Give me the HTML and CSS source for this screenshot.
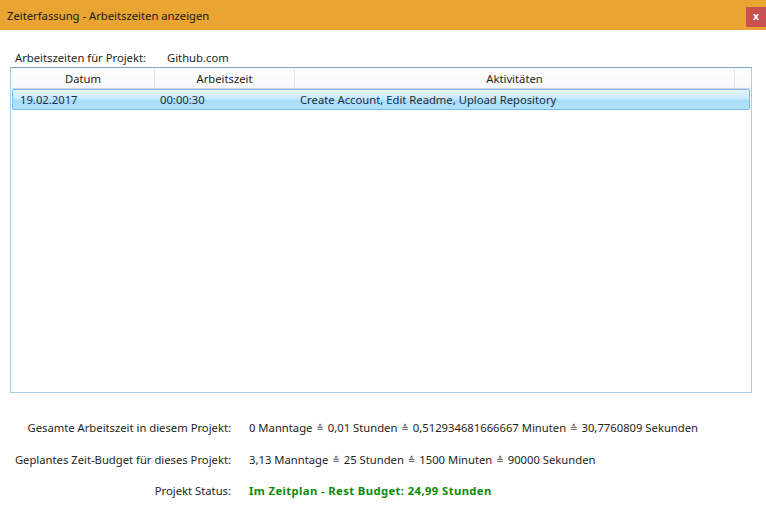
FILE: index.html
```html
<!DOCTYPE html>
<html lang="de">
<head>
<meta charset="utf-8">
<title>Zeiterfassung - Arbeitszeiten anzeigen</title>
<link rel="stylesheet" href="styles.css">
</head>
<body>
<div class="window">
  <header class="titlebar">
    <span class="title">Zeiterfassung - Arbeitszeiten anzeigen</span>
    <button class="close">x</button>
  </header>
  <main class="content">
    <div class="project">
      <span class="project-label">Arbeitszeiten für Projekt:</span>
      <span class="project-name">Github.com</span>
    </div>
    <div class="list">
      <div class="list-head">
        <div class="col c1">Datum</div>
        <div class="col c2">Arbeitszeit</div>
        <div class="col c3">Aktivitäten</div>
        <div class="col c4"></div>
      </div>
      <div class="row selected">
        <div class="cell c1">19.02.2017</div>
        <div class="cell c2">00:00:30</div>
        <div class="cell c3">Create Account, Edit Readme, Upload Repository</div>
      </div>
    </div>
    <div class="summary">
      <div class="s-label">Gesamte Arbeitszeit in diesem Projekt:</div>
      <div class="s-value">0 Manntage <span class="eq">≙</span> 0,01 Stunden <span class="eq">≙</span> 0,512934681666667 Minuten <span class="eq">≙</span> 30,7760809 Sekunden</div>
      <div class="s-label">Geplantes Zeit-Budget für dieses Projekt:</div>
      <div class="s-value">3,13 Manntage <span class="eq">≙</span> 25 Stunden <span class="eq">≙</span> 1500 Minuten <span class="eq">≙</span> 90000 Sekunden</div>
      <div class="s-label">Projekt Status:</div>
      <div class="s-value status">Im Zeitplan - Rest Budget: 24,99 Stunden</div>
    </div>
  </main>
</div>
</body>
</html>
```
FILE: styles.css
```css
* { box-sizing: border-box; }
html, body { margin: 0; padding: 0; background: #fff; }
body {
  font-family: "Noto Sans", "Open Sans", "DejaVu Sans", sans-serif;
  font-size: 11.25px;
  color: #1e1e1e;
}
.window { width: 766px; height: 506px; display: flex; flex-direction: column; }
.titlebar {
  height: 30px;
  flex: none;
  background: #e9a431;
  display: flex;
  align-items: center;
  justify-content: space-between;
  padding-left: 7px;
}
.title { color: #1a1a1a; padding-top: 1px; }
.close {
  width: 20px; height: 20px;
  margin: 0;
  border: 0;
  padding: 0;
  background: #c75050;
  color: #fff;
  font-family: "DejaVu Sans", sans-serif;
  font-weight: bold;
  font-size: 10px;
  line-height: 18px;
  align-self: flex-start;
  margin-top: 7px;
}
.content { padding: 17px 15px 0 10px; display: flex; flex-direction: column; }
.project { display: flex; padding-left: 5px; height: 20px; align-items: center; white-space: nowrap; }
.project-label { width: 152px; }
.list {
  width: 742px;
  height: 326px;
  border: 1px solid #a4cfe9;
  border-top-color: #82a9c4;
  padding: 0 1px;
}
.list-head {
  display: flex;
  height: 21px;
  background: linear-gradient(#ffffff, #f7f8fa);
  border-bottom: 1px solid #d5d5d5;
}
.col {
  display: flex; align-items: center; justify-content: center;
  border-right: 1px solid #e2e3e5;
  height: 100%;
}
.c1 { width: 143px; }
.c2 { width: 140px; }
.c3 { width: 440px; }
.col.c4 { flex: 1; border-right: 0; }
.row {
  display: flex;
  height: 21px;
  align-items: center;
  border: 1px solid #7fb6e8;
  border-radius: 2px;
  background: linear-gradient(#e1f3fd 0%, #c9eafc 45%, #a8defb 55%, #b0e1fb 100%);
  color: #1e2b44;
  white-space: nowrap;
}
.cell { padding-left: 7px; }
.row .c1 { width: 142px; }
.row .c2 { width: 140px; padding-left: 5px; }
.row .c3 { padding-left: 5px; }
.summary {
  display: grid;
  grid-template-columns: 221px 1fr;
  column-gap: 18px;
  margin-top: 19px;
  white-space: nowrap;
}
.s-label, .s-value { height: 31.5px; display: flex; align-items: center; }
.s-value { white-space: pre; }
.s-label { justify-content: flex-end; }
.eq { font-size: 9px; color: #444; padding: 0 1px; }
.status { color: #0a8a0a; font-weight: bold; letter-spacing: 0.4px; }
```
